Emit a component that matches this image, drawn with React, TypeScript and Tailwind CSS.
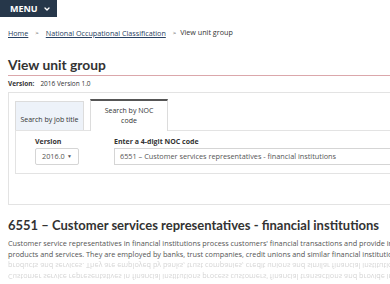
import { ChevronDown } from 'lucide-react';

const para = (
  <>
    <div className="whitespace-nowrap">
      Customer service representatives in financial institutions process customers' financial transactions and provide information on related
    </div>
    <div className="whitespace-nowrap">
      products and services. They are employed by banks, trust companies, credit unions and similar financial institutions.
    </div>
  </>
);

const App = () => {
  return (
    <div className="w-[390px] h-[284px] overflow-hidden bg-white font-['Open_Sans',sans-serif] text-[#333]">
      {/* Menu */}
      <div className="flex h-[17px] w-[57px] items-center gap-[5px] bg-[#26374a] pl-[10px] text-[9px] font-bold text-white">
        MENU
        <ChevronDown className="h-[8px] w-[8px]" strokeWidth={4} />
      </div>

      {/* Breadcrumb */}
      <div className="mt-[11px] flex items-center gap-[7px] pl-[8px] text-[7.2px] leading-[9px]">
        <a className="text-[#284162] underline">Home</a>
        <span className="text-[6px]">&gt;</span>
        <a className="text-[#284162] underline">National Occupational Classification</a>
        <span>
          <span className="mr-[4px] text-[6px]">&gt;</span>View unit group
        </span>
      </div>

      {/* Title */}
      <h1 className="ml-[8px] mt-[17px] border-b border-[#dba7ab] pb-[1px] font-['Lato',sans-serif] text-[13.8px] font-bold leading-[19px] text-[#333]">
        View unit group
      </h1>
      <div className="mt-[3px] pl-[8px] text-[6.5px] leading-[9px]">
        <span className="font-bold">Version:</span>
        <span className="ml-[6px]">2016 Version 1.0</span>
      </div>

      {/* Search panel */}
      <div className="ml-[8px] mt-[4px] h-[113px] w-[400px] border border-[#e3e3e3] px-[6px] pt-[6px]">
        <div className="flex items-end gap-[6px]">
          <div className="flex h-[29px] w-[69px] items-end justify-center border border-b-0 border-[#dcdcdc] bg-[#edf2f9] pb-[5px] text-[7px]">
            Search by job title
          </div>
          <div className="-mb-px flex h-[32px] w-[78px] flex-col items-center justify-center border-x border-t-[2px] border-x-[#dcdcdc] border-t-[#555] bg-white text-center text-[7px] leading-[10px]">
            <span>Search by NOC</span>
            <span>code</span>
          </div>
        </div>
        <div className="flex h-[44px] border border-[#e3e3e3] pl-[19px] pt-[5px]">
          <div className="flex flex-col">
            <span className="text-[7px] font-bold leading-[11px]">Version</span>
            <div className="mt-[1px] flex h-[17px] w-[44px] items-center justify-between rounded-[2px] border border-[#d5d5d5] pl-[6px] pr-[6px] text-[7.3px] text-[#555]">
              <span>2016.0</span>
              <span className="text-[5px]">▼</span>
            </div>
          </div>
          <div className="ml-[35px] flex flex-col">
            <span className="text-[7px] font-bold leading-[11px]">Enter a 4-digit NOC code</span>
            <div className="mt-[1px] flex h-[17px] w-[300px] items-center border border-[#d5d5d5] px-[5px] text-[7.3px] text-[#555]">
              6551 – Customer services representatives - financial institutions
            </div>
          </div>
        </div>
      </div>

      {/* Result */}
      <h2 className="ml-[8px] mt-[11px] whitespace-nowrap font-['Lato',sans-serif] text-[13px] font-bold leading-[18px] text-[#333]">
        6551 – Customer services representatives - financial institutions
      </h2>
      <div className="ml-[8px] mt-[4px] text-[7.3px] leading-[11px] text-[#555]">{para}</div>
      <div className="ml-[8px] -scale-y-100 text-[7.3px] leading-[11px] text-[#555] opacity-25 blur-[0.3px]">{para}</div>
    </div>
  );
};

export default App;
